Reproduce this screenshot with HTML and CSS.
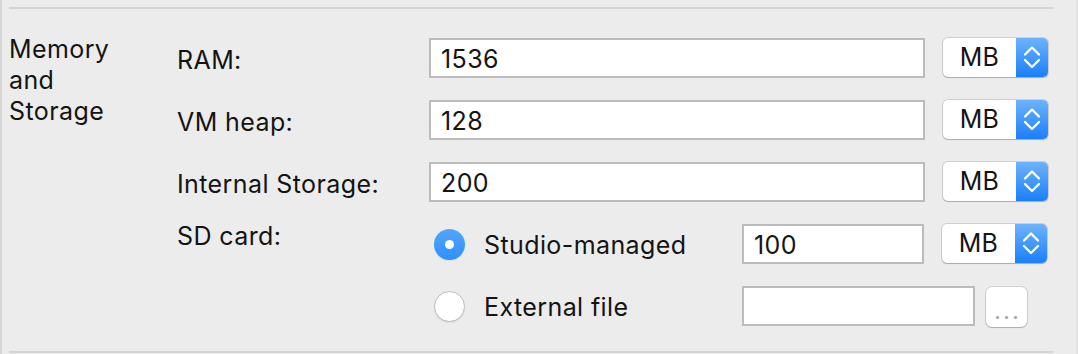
FILE: index.html
```html
<!DOCTYPE html>
<html lang="en">
<head>
<meta charset="utf-8">
<title>Memory and Storage</title>
<link rel="stylesheet" href="styles.css">
</head>
<body>
<div class="panel">
  <div class="rule"></div>
  <div class="section">
    <div class="cat">Memory<br>and<br>Storage</div>
    <div class="rows">
      <div class="row">
        <div class="label">RAM:</div>
        <div class="field wide">1536</div>
        <div class="unit"><span class="unit-text">MB</span><span class="unit-arrows"><svg width="32" height="39" viewBox="0 0 32 39"><polyline points="9,16.5 16,9.5 23,16.5"/><polyline points="9,22 16,29 23,22"/></svg></span></div>
      </div>
      <div class="row">
        <div class="label">VM heap:</div>
        <div class="field wide">128</div>
        <div class="unit"><span class="unit-text">MB</span><span class="unit-arrows"><svg width="32" height="39" viewBox="0 0 32 39"><polyline points="9,16.5 16,9.5 23,16.5"/><polyline points="9,22 16,29 23,22"/></svg></span></div>
      </div>
      <div class="row">
        <div class="label">Internal Storage:</div>
        <div class="field wide">200</div>
        <div class="unit"><span class="unit-text">MB</span><span class="unit-arrows"><svg width="32" height="39" viewBox="0 0 32 39"><polyline points="9,16.5 16,9.5 23,16.5"/><polyline points="9,22 16,29 23,22"/></svg></span></div>
      </div>
      <div class="row">
        <div class="label top">SD card:</div>
        <div class="option">
          <span class="radio checked"></span>
          <span class="option-text">Studio-managed</span>
        </div>
        <div class="field small">100</div>
        <div class="unit"><span class="unit-text">MB</span><span class="unit-arrows"><svg width="32" height="39" viewBox="0 0 32 39"><polyline points="9,16.5 16,9.5 23,16.5"/><polyline points="9,22 16,29 23,22"/></svg></span></div>
      </div>
      <div class="row">
        <div class="label"></div>
        <div class="option">
          <span class="radio"></span>
          <span class="option-text">External file</span>
        </div>
        <div class="field file"></div>
        <div class="browse">...</div>
      </div>
    </div>
  </div>
  <div class="rule bottom"></div>
</div>
</body>
</html>
```
FILE: styles.css
```css
html, body {
  margin: 0;
  padding: 0;
  background: #ececec;
}
body {
  font-family: Inter, "Liberation Sans", Arial, sans-serif;
  font-size: 25px;
  letter-spacing: 0.4px;
  color: #141414;
}
.panel {
  box-sizing: border-box;
  width: 1078px;
  height: 354px;
  border-left: 2px solid #d6d6d6;
  border-right: 2px solid #e2e2e2;
  padding: 7px 23px 0 7px;
}
.rule {
  height: 2px;
  background: #d4d4d4;
}
.rule.bottom {
  margin-top: 25px;
}
.section {
  display: flex;
  margin-top: 25px;
}
.cat {
  width: 168px;
  flex: none;
  line-height: 31px;
}
.rows {
  padding-top: 4px;
  display: flex;
  flex-direction: column;
  gap: 22px;
}
.row {
  display: flex;
  align-items: flex-start;
  height: 40px;
}
.label {
  width: 252px;
  flex: none;
  box-sizing: border-box;
  padding-top: 4px;
  line-height: 36px;
}
.label.top {
  padding-top: 0;
  line-height: 24px;
}
.field {
  box-sizing: border-box;
  height: 40px;
  background: #fff;
  border: 2px solid #bcbcbc;
  padding: 2px 10px 0;
  line-height: 34px;
  flex: none;
}
.field.wide { width: 496px; }
.field.small { width: 182px; }
.field.file { width: 233px; }
.unit {
  margin-left: 18px;
  width: 105px;
  height: 39px;
  display: flex;
  border-radius: 5px;
  overflow: hidden;
  background: #fff;
  box-shadow: 0 0 0 1px rgba(0,0,0,0.12), 0 1px 1px rgba(0,0,0,0.18);
  flex: none;
}
.unit-text {
  flex: 1;
  text-align: center;
  line-height: 39px;
}
.unit-arrows {
  width: 32px;
  height: 39px;
  background: linear-gradient(#6db3fa, #1a7ffb);
  display: flex;
}
.unit-arrows polyline {
  fill: none;
  stroke: #fff;
  stroke-width: 2.3;
  stroke-linecap: round;
  stroke-linejoin: round;
}
.option {
  width: 313px;
  flex: none;
  display: flex;
  align-items: center;
  height: 40px;
}
.radio {
  box-sizing: border-box;
  width: 31px;
  height: 31px;
  margin-left: 5px;
  border-radius: 50%;
  background: #fff;
  border: 1px solid #bdbdbd;
  box-shadow: 0 1px 1px rgba(0,0,0,0.08);
  flex: none;
  display: flex;
  align-items: center;
  justify-content: center;
}
.radio.checked {
  border: none;
  background: linear-gradient(#52a6fb, #2f90fb);
}
.radio.checked::after {
  content: "";
  width: 9px;
  height: 9px;
  border-radius: 50%;
  background: #fff;
}
.option-text {
  margin-left: 19px;
  padding-top: 2px;
  line-height: 38px;
}
.browse {
  box-sizing: border-box;
  margin-left: 11px;
  margin-top: 1px;
  width: 41px;
  height: 40px;
  border-radius: 6px;
  background: #fff;
  box-shadow: 0 0 0 1px rgba(0,0,0,0.12), 0 1px 1px rgba(0,0,0,0.16);
  color: #a6a6a6;
  font-size: 18px;
  font-weight: 700;
  letter-spacing: 3px;
  text-align: center;
  padding-left: 3px;
  line-height: 52px;
  overflow: hidden;
}
```
